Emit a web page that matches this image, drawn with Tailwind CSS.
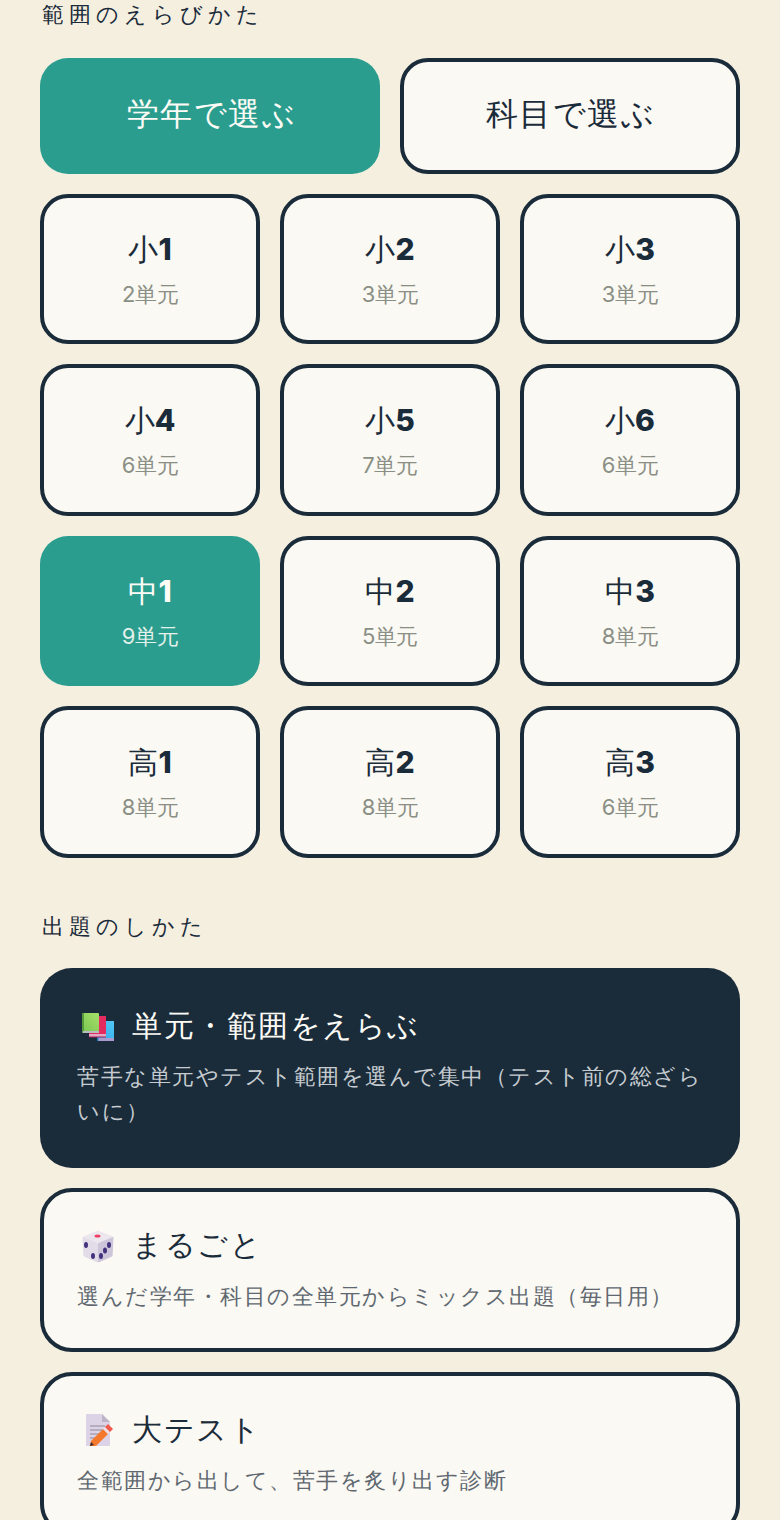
<!DOCTYPE html>
<html lang="ja">
<head>
  <meta charset="UTF-8">
  <title>範囲のえらびかた</title>
  <script src="https://cdn.jsdelivr.net/npm/@tailwindcss/browser@4"></script>
</head>
<body class="bg-[#f5efe0] text-[#1a2b3a] font-['Inter',sans-serif] overflow-hidden">
  <div class="h-[1520px] px-10 overflow-hidden">
    <h2 class="h-[30px] leading-[28px] text-[22px] tracking-[5px] pl-0.5">範囲のえらびかた</h2>

    <div class="mt-7 grid grid-cols-2 gap-5">
      <button class="h-[116px] pb-[5px] pl-[3px] rounded-[28px] bg-[#2a9d8f] text-[#fdfbf5] text-[32px] tracking-[1.6px]">学年で選ぶ</button>
      <button class="h-[116px] pb-[5px] pl-[1px] rounded-[28px] border-4 border-[#1a2b3a] bg-[#fbf9f3] text-[32px] tracking-[1.6px]">科目で選ぶ</button>
    </div>

    <div class="mt-5 grid grid-cols-3 grid-rows-[150px_152px_150px_152px] gap-5">
      <button class="pb-[1px] rounded-[28px] border-4 border-[#1a2b3a] bg-[#fbf9f3] flex flex-col items-center justify-center gap-[7px]"><span class="text-[30px] leading-[44px]">小<b class="font-extrabold">1</b></span><span class="text-[22px] leading-[32px] tracking-[-0.4px] text-[#8a8f85]">2単元</span></button>
      <button class="pb-[1px] rounded-[28px] border-4 border-[#1a2b3a] bg-[#fbf9f3] flex flex-col items-center justify-center gap-[7px]"><span class="text-[30px] leading-[44px]">小<b class="font-extrabold">2</b></span><span class="text-[22px] leading-[32px] tracking-[-0.4px] text-[#8a8f85]">3単元</span></button>
      <button class="pb-[1px] rounded-[28px] border-4 border-[#1a2b3a] bg-[#fbf9f3] flex flex-col items-center justify-center gap-[7px]"><span class="text-[30px] leading-[44px]">小<b class="font-extrabold">3</b></span><span class="text-[22px] leading-[32px] tracking-[-0.4px] text-[#8a8f85]">3単元</span></button>
      <button class="pb-[1px] rounded-[28px] border-4 border-[#1a2b3a] bg-[#fbf9f3] flex flex-col items-center justify-center gap-[7px]"><span class="text-[30px] leading-[44px]">小<b class="font-extrabold">4</b></span><span class="text-[22px] leading-[32px] tracking-[-0.4px] text-[#8a8f85]">6単元</span></button>
      <button class="pb-[1px] rounded-[28px] border-4 border-[#1a2b3a] bg-[#fbf9f3] flex flex-col items-center justify-center gap-[7px]"><span class="text-[30px] leading-[44px]">小<b class="font-extrabold">5</b></span><span class="text-[22px] leading-[32px] tracking-[-0.4px] text-[#8a8f85]">7単元</span></button>
      <button class="pb-[1px] rounded-[28px] border-4 border-[#1a2b3a] bg-[#fbf9f3] flex flex-col items-center justify-center gap-[7px]"><span class="text-[30px] leading-[44px]">小<b class="font-extrabold">6</b></span><span class="text-[22px] leading-[32px] tracking-[-0.4px] text-[#8a8f85]">6単元</span></button>
      <button class="pb-[1px] rounded-[28px] bg-[#2a9d8f] flex flex-col items-center justify-center gap-[7px]"><span class="text-[30px] leading-[44px] text-[#fdfbf5]">中<b class="font-extrabold">1</b></span><span class="text-[22px] leading-[32px] tracking-[-0.4px] text-[#e4f1ea]">9単元</span></button>
      <button class="pb-[1px] rounded-[28px] border-4 border-[#1a2b3a] bg-[#fbf9f3] flex flex-col items-center justify-center gap-[7px]"><span class="text-[30px] leading-[44px]">中<b class="font-extrabold">2</b></span><span class="text-[22px] leading-[32px] tracking-[-0.4px] text-[#8a8f85]">5単元</span></button>
      <button class="pb-[1px] rounded-[28px] border-4 border-[#1a2b3a] bg-[#fbf9f3] flex flex-col items-center justify-center gap-[7px]"><span class="text-[30px] leading-[44px]">中<b class="font-extrabold">3</b></span><span class="text-[22px] leading-[32px] tracking-[-0.4px] text-[#8a8f85]">8単元</span></button>
      <button class="pb-[1px] rounded-[28px] border-4 border-[#1a2b3a] bg-[#fbf9f3] flex flex-col items-center justify-center gap-[7px]"><span class="text-[30px] leading-[44px]">高<b class="font-extrabold">1</b></span><span class="text-[22px] leading-[32px] tracking-[-0.4px] text-[#8a8f85]">8単元</span></button>
      <button class="pb-[1px] rounded-[28px] border-4 border-[#1a2b3a] bg-[#fbf9f3] flex flex-col items-center justify-center gap-[7px]"><span class="text-[30px] leading-[44px]">高<b class="font-extrabold">2</b></span><span class="text-[22px] leading-[32px] tracking-[-0.4px] text-[#8a8f85]">8単元</span></button>
      <button class="pb-[1px] rounded-[28px] border-4 border-[#1a2b3a] bg-[#fbf9f3] flex flex-col items-center justify-center gap-[7px]"><span class="text-[30px] leading-[44px]">高<b class="font-extrabold">3</b></span><span class="text-[22px] leading-[32px] tracking-[-0.4px] text-[#8a8f85]">6単元</span></button>
    </div>

    <h2 class="mt-[54px] h-[30px] leading-[28px] text-[22px] tracking-[5px] pl-0.5">出題のしかた</h2>

    <div class="mt-[26px] flex flex-col gap-5">
      <div class="h-[200px] rounded-[32px] bg-[#1a2b3a] px-[37px] pt-[38px]">
        <div class="flex items-center h-10 text-[30px] tracking-[1.5px] text-[#fdfbf5]">
          <svg class="ml-1 mr-[17px] w-[34px] h-[32px]" viewBox="0 0 34 32">
            <defs>
              <linearGradient id="bookGreen" x1="0" y1="1" x2="1" y2="0"><stop offset="0" stop-color="#7cc652"/><stop offset="1" stop-color="#a5e06a"/></linearGradient>
              <linearGradient id="bookBlue" x1="0" y1="1" x2="1" y2="0"><stop offset="0" stop-color="#2fa8ea"/><stop offset="1" stop-color="#53c8f5"/></linearGradient>
            </defs>
            <rect x="16" y="11" width="17" height="18" fill="url(#bookBlue)"/><rect x="16" y="28" width="17" height="3" fill="#a99ad0"/><rect x="16" y="11" width="1.5" height="20" fill="#1f7fc0"/>
            <rect x="8" y="6" width="17" height="18" fill="#e32b5f"/><rect x="8" y="24" width="17" height="3" fill="#e3a8c4"/><rect x="8" y="26.5" width="17" height="1" fill="#a81f55"/>
            <rect x="1" y="3" width="17" height="18" rx="1" fill="url(#bookGreen)"/><rect x="1" y="3" width="2" height="20" fill="#559a3c"/><rect x="2" y="21" width="16" height="2" fill="#b8bcc0"/>
          </svg>
          <span class="-mt-0.5">単元・範囲をえらぶ</span>
        </div>
        <p class="mt-[13px] text-[22px] leading-[35px] tracking-[1.5px] text-[#c6ccd0]">苦手な単元やテスト範囲を選んで集中（テスト前の総ざらいに）</p>
      </div>

      <div class="h-[164px] rounded-[32px] border-4 border-[#1a2b3a] bg-[#fbf9f3] px-[33px] pt-[34px]">
        <div class="flex items-center h-10 text-[30px] tracking-[1.5px]">
          <svg class="ml-1 mr-[17px] w-[34px] h-[34px]" viewBox="0 0 34 34">
            <path d="M16 2.5Q17 2 18 2.5L31.5 8 17 14 2.5 8Z" fill="#ece6ee" stroke="#ece6ee" stroke-linejoin="round"/>
            <path d="M2 8.5 16.5 14.5V33L3 27Z" fill="#e2dce8" stroke="#e2dce8" stroke-linejoin="round"/>
            <path d="M32 8.5 17.5 14.5V33L31 27Z" fill="#cdc6da" stroke="#cdc6da" stroke-linejoin="round"/>
            <ellipse cx="16.5" cy="7" rx="3" ry="1.5" fill="#ee3f63"/>
            <ellipse cx="5" cy="16" rx="2" ry="3" fill="#43337f"/><ellipse cx="12" cy="27" rx="2" ry="3" fill="#43337f"/>
            <ellipse cx="28" cy="16" rx="2" ry="3" fill="#43337f"/><ellipse cx="24" cy="21.5" rx="2" ry="3" fill="#43337f"/><ellipse cx="20" cy="27" rx="2" ry="3" fill="#43337f"/>
          </svg>
          <span class="-mt-1">まるごと</span>
        </div>
        <p class="mt-[13px] text-[22px] leading-[35px] tracking-[1.5px] text-[#5f6870]">選んだ学年・科目の全単元からミックス出題（毎日用）</p>
      </div>

      <div class="h-[164px] rounded-[32px] border-4 border-[#1a2b3a] bg-[#fbf9f3] px-[33px] pt-[34px]">
        <div class="flex items-center h-10 text-[30px] tracking-[1.5px]">
          <svg class="ml-[4px] mr-[17px] w-[34px] h-[32px]" viewBox="0 0 34 32">
            <path d="M5 0H21L29 8V32H5Z" fill="#dcd3e6"/><path d="M21 0 29 8H21Z" fill="#bdb5c6"/>
            <path d="M9 12H24M9 16H26M9 20H22M9 24H15" stroke="#a9a3b2" stroke-width="1.5"/>
            <path d="M10 27 22 15 27 20 15 32H9Z" fill="#f5792d"/><path d="M9 32 10 28 13 31Z" fill="#3d2a2a"/>
            <path d="M22 15 24 13 29 18 27 20Z" fill="#f3dfe0"/>
            <path d="M24 13 27 10 32 15 29 18Z" fill="#f05a4a"/>
          </svg>
          <span class="-mt-0.5">大テスト</span>
        </div>
        <p class="mt-[13px] text-[22px] leading-[35px] tracking-[1.5px] text-[#5f6870]">全範囲から出して、苦手を炙り出す診断</p>
      </div>
    </div>
  </div>
</body>
</html>
